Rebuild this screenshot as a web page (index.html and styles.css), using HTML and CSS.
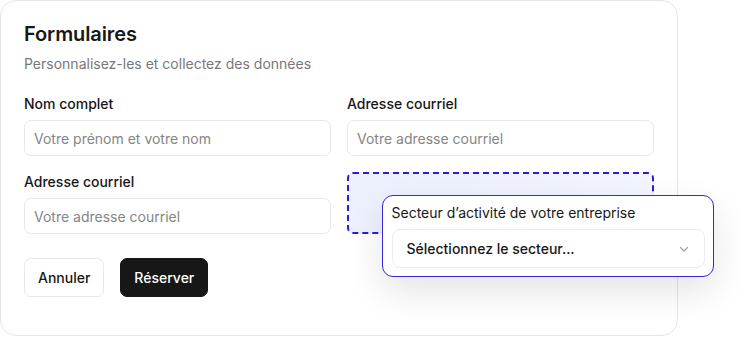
FILE: index.html
```html
<!DOCTYPE html>
<html lang="fr">
<head>
  <meta charset="UTF-8">
  <meta name="viewport" content="width=device-width, initial-scale=1.0">
  <title>Formulaires</title>
  <link rel="stylesheet" href="styles.css">
</head>
<body>
  <!-- Form Card -->
  <section class="card">
    <h1 class="card-title">Formulaires</h1>
    <p class="card-subtitle">Personnalisez-les et collectez des données</p>

    <div class="form-grid">
      <div class="field">
        <label class="field-label">Nom complet</label>
        <input class="field-input" type="text" placeholder="Votre prénom et votre nom">
      </div>
      <div class="field">
        <label class="field-label">Adresse courriel</label>
        <input class="field-input" type="email" placeholder="Votre adresse courriel">
      </div>
      <div class="field">
        <label class="field-label">Adresse courriel</label>
        <input class="field-input" type="email" placeholder="Votre adresse courriel">
      </div>
      <div class="drop-zone"></div>
    </div>

    <div class="actions">
      <button class="btn btn-outline">Annuler</button>
      <button class="btn btn-dark">Réserver</button>
    </div>

    <!-- Dragged field -->
    <div class="floating-field">
      <div class="floating-label">Secteur d’activité de votre entreprise</div>
      <div class="select">
        <span>Sélectionnez le secteur...</span>
        <svg width="12" height="12" viewBox="0 0 12 12" fill="none">
          <path d="M2.5 4.5 6 8l3.5-3.5" stroke="#a3a3a3" stroke-width="1.2" stroke-linecap="round" stroke-linejoin="round"/>
        </svg>
      </div>
    </div>
  </section>
</body>
</html>
```

FILE: styles.css
```css
/* Global Styles */
* {
  box-sizing: border-box;
  margin: 0;
  padding: 0;
}

body {
  font-family: Inter, "Noto Sans", sans-serif;
  color: #171717;
  background-color: #fff;
}

/* Card */
.card {
  position: relative;
  width: 678px;
  height: 336px;
  padding: 19px 23px 0;
  background-color: #fff;
  border: 1px solid #e6e6e6;
  border-radius: 16px;
}

.card-title {
  font-size: 20px;
  line-height: 28px;
  font-weight: 600;
  letter-spacing: -0.1px;
}

.card-subtitle {
  margin-top: 6px;
  font-size: 14px;
  line-height: 20px;
  color: #787878;
}

/* Form Grid */
.form-grid {
  display: grid;
  grid-template-columns: 1fr 1fr;
  column-gap: 16px;
  row-gap: 16px;
  margin-top: 20px;
}

.field {
  display: flex;
  flex-direction: column;
  gap: 6px;
}

.field-label {
  font-size: 14px;
  line-height: 20px;
  font-weight: 500;
}

.field-input {
  height: 36px;
  padding: 0 9px;
  font-family: inherit;
  font-size: 14px;
  color: #171717;
  background-color: #fff;
  border: 1px solid #e8e8e8;
  border-radius: 7px;
  outline: none;
}

.field-input::placeholder {
  color: #858585;
}

.drop-zone {
  border: 2px dashed #2b1ed2;
  border-radius: 6px;
  background: linear-gradient(135deg, #ecf0fe, #f4f6ff);
}

/* Buttons */
.actions {
  display: flex;
  gap: 16px;
  margin-top: 24px;
}

.btn {
  height: 39px;
  padding: 0 13px;
  font-family: inherit;
  font-size: 14px;
  font-weight: 500;
  border-radius: 7px;
  cursor: pointer;
}

.btn-outline {
  color: #171717;
  background-color: #fff;
  border: 1px solid #e8e8e8;
}

.btn-dark {
  color: #fff;
  background-color: #171717;
  border: 1px solid #171717;
}

/* Floating Field */
.floating-field {
  position: absolute;
  left: 381px;
  top: 194px;
  width: 332px;
  padding: 8px 8.5px;
  background-color: #fff;
  border: 1.5px solid #3b26dc;
  border-radius: 11px;
  box-shadow: 0 14px 36px rgba(0, 0, 0, 0.11);
}

.floating-label {
  font-size: 14px;
  line-height: 18px;
}

.select {
  display: flex;
  align-items: center;
  justify-content: space-between;
  height: 39px;
  margin-top: 7px;
  padding: 0 14px;
  font-size: 14px;
  font-weight: 500;
  border: 1px solid #ececec;
  border-radius: 8px;
}
```
